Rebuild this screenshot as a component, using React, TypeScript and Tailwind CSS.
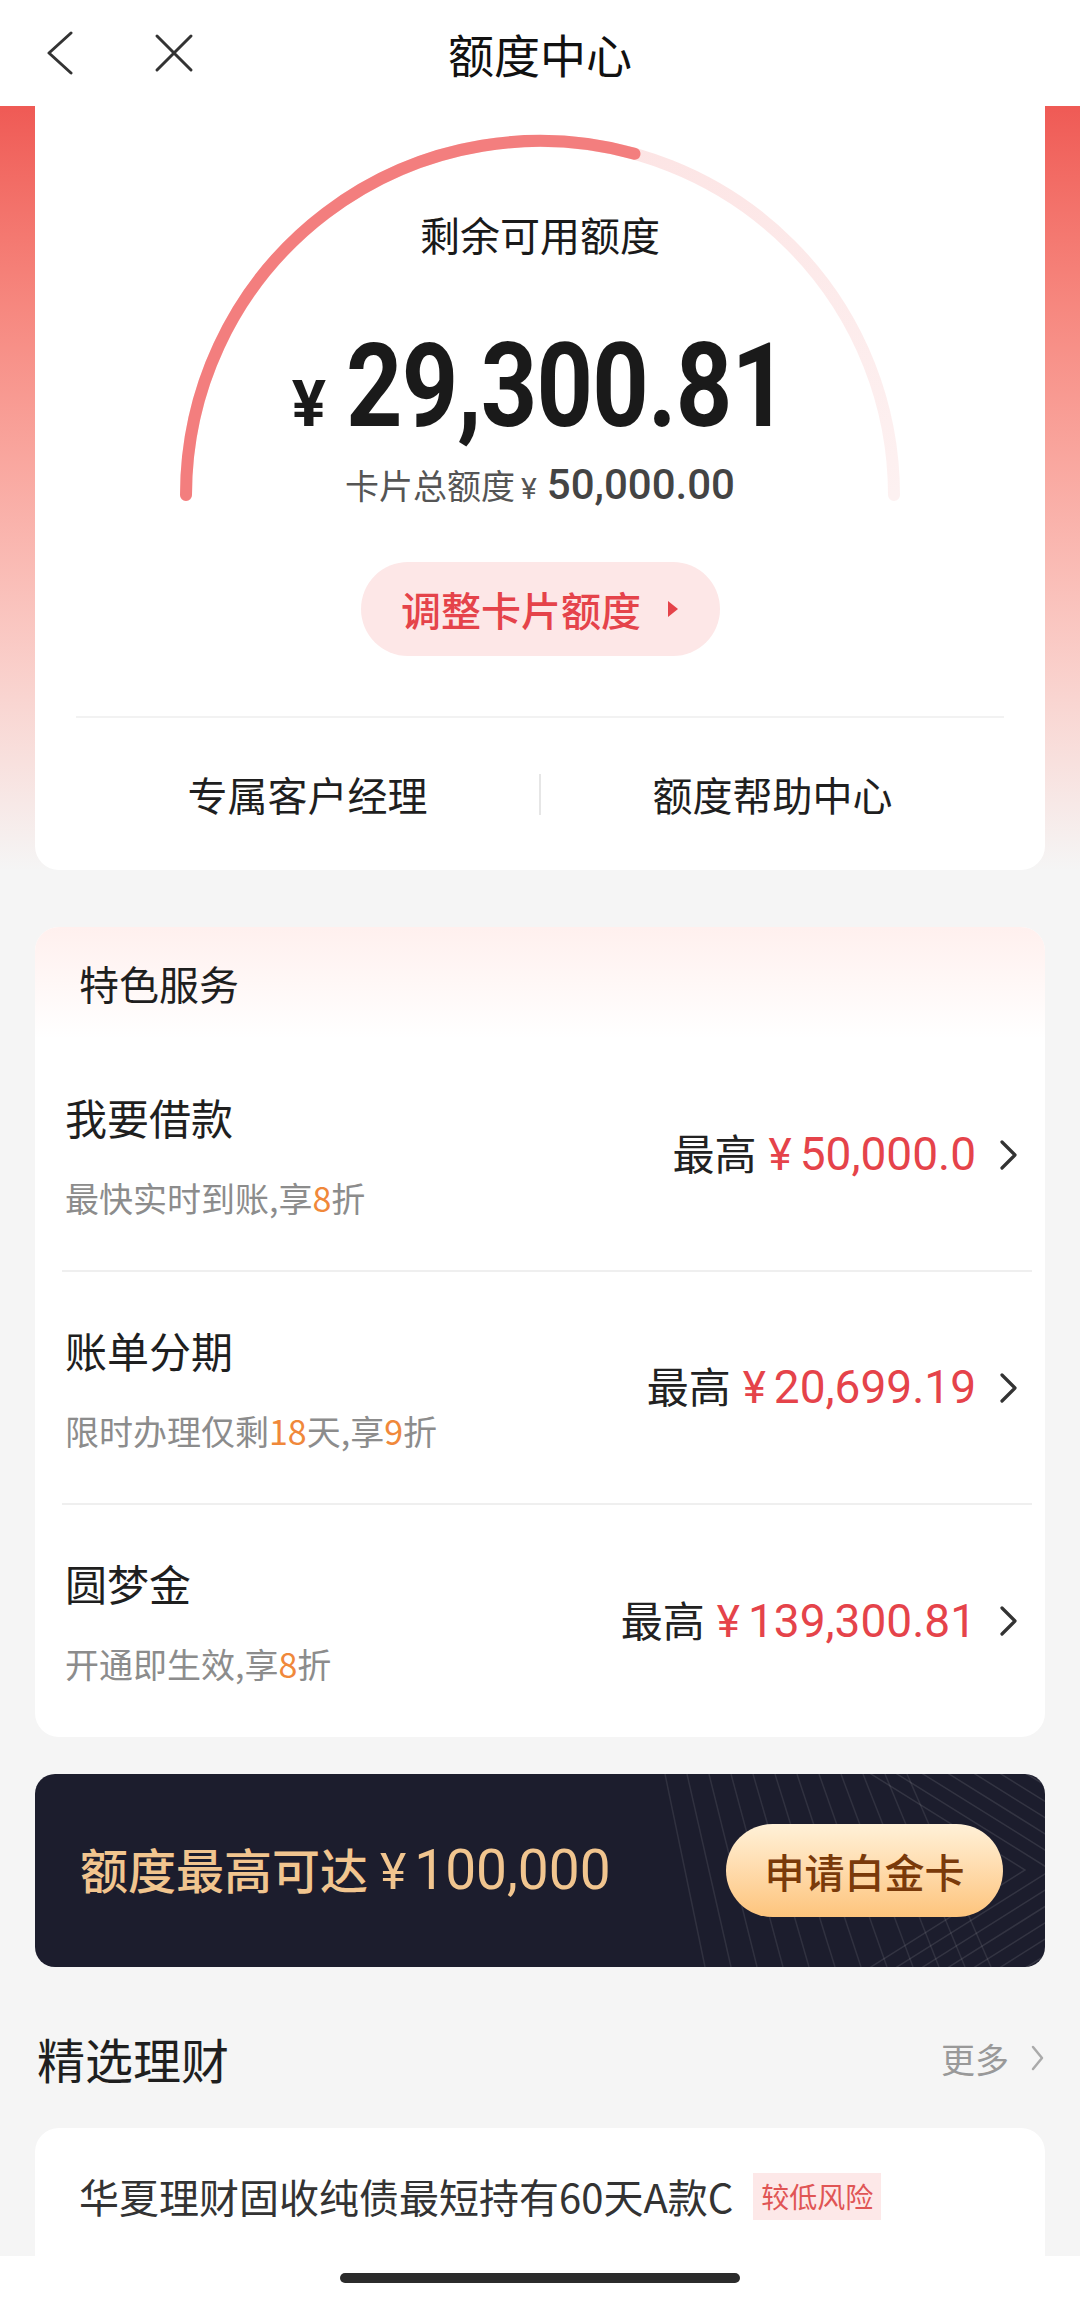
import React from "react";

interface Service {
  title: string;
  sub: React.ReactNode;
  amount: string;
}

const services: Service[] = [
  {
    title: "我要借款",
    sub: (
      <>
        最快实时到账,享<span className="text-[#f0883a]">8</span>折
      </>
    ),
    amount: "50,000.0",
  },
  {
    title: "账单分期",
    sub: (
      <>
        限时办理仅剩<span className="text-[#f0883a]">18</span>天,享
        <span className="text-[#f0883a]">9</span>折
      </>
    ),
    amount: "20,699.19",
  },
  {
    title: "圆梦金",
    sub: (
      <>
        开通即生效,享<span className="text-[#f0883a]">8</span>折
      </>
    ),
    amount: "139,300.81",
  },
];

function Chevron({ className, color = "#333", w = 18, h = 30, sw = 3.2 }: { className?: string; color?: string; w?: number; h?: number; sw?: number }) {
  return (
    <svg className={className} width={w} height={h} viewBox={`0 0 ${w} ${h}`} fill="none">
      <path d={`M2 2 L${w - 3} ${h / 2} L2 ${h - 2}`} stroke={color} strokeWidth={sw} strokeLinecap="round" strokeLinejoin="round" />
    </svg>
  );
}

function Gauge() {
  // remaining / total = 29300.81 / 50000
  const pct = 29300.81 / 50000;
  const r = 354;
  const cx = 360;
  const cy = 366;
  const a = Math.PI - pct * Math.PI;
  const ex = cx + r * Math.cos(a);
  const ey = cy - r * Math.sin(a);
  return (
    <svg className="absolute left-[145px] top-[23px]" width="720" height="372" viewBox="0 0 720 372" fill="none">
      <defs>
        <linearGradient id="track" x1="0" y1="0" x2="1" y2="1">
          <stop offset="0" stopColor="#fcdede" />
          <stop offset="1" stopColor="#fdf1f1" />
        </linearGradient>
      </defs>
      <path d={`M6 ${cy} A${r} ${r} 0 0 1 714 ${cy}`} stroke="url(#track)" strokeWidth="12" strokeLinecap="round" />
      <path d={`M6 ${cy} A${r} ${r} 0 0 1 ${ex.toFixed(1)} ${ey.toFixed(1)}`} stroke="#f37e7e" strokeWidth="12" strokeLinecap="round" />
    </svg>
  );
}

function BannerLines() {
  const fan = Array.from({ length: 12 }, (_, i) => i);
  const chev = Array.from({ length: 8 }, (_, i) => i);
  return (
    <svg className="absolute right-0 top-0" width="420" height="193" viewBox="0 0 420 193" fill="none">
      {fan.map((i) => (
        <line key={"f" + i} x1={40 + i * 22} y1={0} x2={80 + i * 26} y2={193} stroke="#ffffff" strokeOpacity="0.09" strokeWidth="1.5" />
      ))}
      {chev.map((i) => (
        <polyline
          key={"c" + i}
          points={`${230 + i * 26},-10 ${400 + i * 26},96 ${230 + i * 26},203`}
          stroke="#ffffff"
          strokeOpacity="0.1"
          strokeWidth="1.5"
        />
      ))}
    </svg>
  );
}

export default function App() {
  return (
    <div className="relative h-[2300px] w-[1080px] overflow-hidden bg-[#f5f5f5] font-['Noto_Sans_CJK_SC',sans-serif] text-[#222]">
      {/* nav bar */}
      <header className="relative flex h-[106px] items-center bg-white pl-[46px]">
        <svg width="28" height="44" viewBox="0 0 28 44" fill="none">
          <path d="M25 2 L3 22 L25 42" stroke="#333" strokeWidth="3" strokeLinecap="round" strokeLinejoin="round" />
        </svg>
        <svg className="ml-[80px]" width="40" height="40" viewBox="0 0 40 40" fill="none">
          <path d="M3 3 L37 37 M37 3 L3 37" stroke="#333" strokeWidth="3" strokeLinecap="round" />
        </svg>
        <div className="pointer-events-none absolute inset-x-0 text-center text-[46px] leading-[56px] text-[#111]">额度中心</div>
      </header>

      {/* quota card */}
      <div className="bg-linear-to-b from-[#ef5a55] to-[#f5f5f5] px-[35px]">
        <section className="relative flex flex-col items-center rounded-b-[24px] bg-white pt-[104px]">
          <Gauge />
          <div className="relative text-[40px] leading-[48px] text-[#1a1a1a]">剩余可用额度</div>
          <div className="relative mt-[72px] flex h-[112px] items-baseline text-[#1a1a1a]">
            <span className="font-['Roboto',sans-serif] text-[64px] font-bold leading-[112px]">¥</span>
            <span className="ml-[-19px] mr-[-38px] inline-block origin-center scale-x-[0.85] font-['Roboto',sans-serif] text-[116px] font-bold leading-[112px] tracking-[-1px]">
              29,300.81
            </span>
          </div>
          <div className="relative mt-[11px] flex h-[48px] items-baseline text-[#555]">
            <span className="text-[34px] leading-[48px]">卡片总额度</span>
            <span className="ml-[6px] font-['Roboto',sans-serif] text-[30px]">¥</span>
            <span className="ml-[10px] font-['Roboto',sans-serif] text-[42px] font-medium text-[#444]">50,000.00</span>
          </div>
          <button className="relative mt-[61px] flex h-[94px] w-[359px] items-center justify-center gap-[26px] rounded-full bg-[#fde7e7]">
            <span className="text-[40px] font-medium leading-[48px] text-[#e5434a]">调整卡片额度</span>
            <svg width="12" height="18" viewBox="0 0 12 18">
              <path d="M1 1 L11 9 L1 17 Z" fill="#e5434a" />
            </svg>
          </button>
          <div className="mx-[41px] mt-[60px] h-[2px] self-stretch bg-[#f2f2f2]" />
          <div className="mx-[41px] flex h-[152px] items-center self-stretch text-[40px] text-[#1f1f1f]">
            <div className="flex-1 text-center">专属客户经理</div>
            <div className="h-[41px] w-[2px] bg-[#e6e6e6]" />
            <div className="flex-1 text-center">额度帮助中心</div>
          </div>
        </section>
      </div>

      <div className="px-[35px]">
        {/* services */}
        <section className="mt-[57px] overflow-hidden rounded-[24px] bg-white">
          <div className="flex h-[112px] items-center bg-linear-to-b from-[#fff0ee] to-white pl-[44px] text-[40px] text-[#1f1f1f]">特色服务</div>
          <div className="ml-[27px] mr-[13px]">
            {services.map((s, i) => (
              <div
                key={s.title}
                className={`flex items-center justify-between pl-[3px] pr-[14px] ${
                  i < services.length - 1 ? "h-[233px] border-b-2 border-[#efefef]" : "h-[232px]"
                }`}
              >
                <div>
                  <div className="text-[42px] leading-[50px] text-[#1f1f1f]">{s.title}</div>
                  <div className="mt-[36px] text-[34px] leading-[40px] text-[#8c8c8c]">{s.sub}</div>
                </div>
                <div className="flex items-center">
                  <div className="flex items-baseline">
                    <span className="text-[42px] text-[#222]">最高</span>
                    <span className="ml-[12px] font-['Roboto',sans-serif] text-[44px] text-[#e5434a]">¥</span>
                    <span className="ml-[8px] font-['Roboto',sans-serif] text-[46px] text-[#e5434a]">{s.amount}</span>
                  </div>
                  <Chevron className="ml-[24px]" />
                </div>
              </div>
            ))}
          </div>
        </section>

        {/* platinum banner */}
        <section className="relative mt-[37px] flex h-[193px] items-center justify-between overflow-hidden rounded-[20px] bg-[#1c1d2d] pl-[45px] pr-[42px]">
          <BannerLines />
          <div className="relative flex items-baseline text-[#f1c58f]">
            <span className="text-[48px] font-medium">额度最高可达</span>
            <span className="ml-[12px] font-['Roboto',sans-serif] text-[50px]">¥</span>
            <span className="ml-[8px] font-['Roboto',sans-serif] text-[55px]">100,000</span>
          </div>
          <button className="relative flex h-[93px] w-[277px] items-center justify-center rounded-full bg-linear-to-b from-[#fff1d8] to-[#fdc47c] text-[40px] font-medium text-[#7a3a0a]">
            申请白金卡
          </button>
        </section>

        {/* wealth */}
        <div className="mt-[63px] flex h-[56px] items-center justify-between pl-[2px]">
          <h2 className="text-[48px] font-normal leading-[56px] text-[#1f1f1f]">精选理财</h2>
          <div className="flex items-center">
            <span className="text-[34px] text-[#999]">更多</span>
            <Chevron className="ml-[22px]" color="#aaa" w={14} h={26} sw={2.5} />
          </div>
        </div>
        <section className="mt-[42px] h-[220px] rounded-t-[24px] bg-white px-[44px] pt-[44px]">
          <div className="flex items-center">
            <span className="text-[40px] leading-[48px] text-[#333]">华夏理财固收纯债最短持有60天A款C</span>
            <span className="ml-[20px] flex h-[47px] items-center bg-[#fde8e8] px-[8px] text-[28px] text-[#e05555]">较低风险</span>
          </div>
        </section>
      </div>

      {/* home indicator */}
      <div className="absolute inset-x-0 bottom-0 flex h-[44px] justify-center bg-white pt-[17px]">
        <div className="h-[10px] w-[400px] rounded-full bg-[#2b2b2b]" />
      </div>
    </div>
  );
}
